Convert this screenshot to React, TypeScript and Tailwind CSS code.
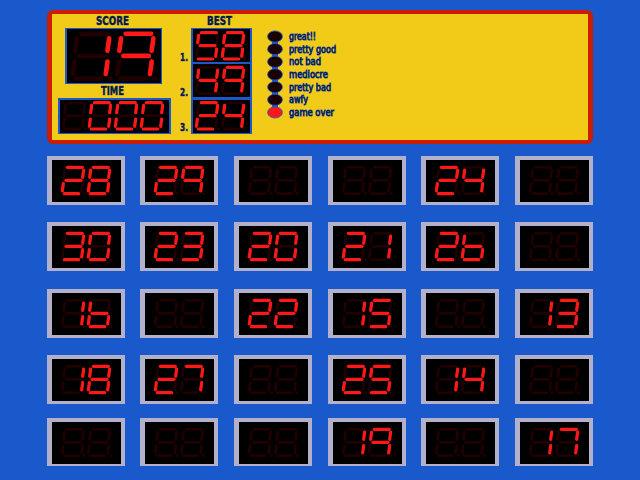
const SHAPES: Record<string, string> = {
  "0": "abcdef", "1": "bc", "2": "abdeg", "3": "abcdg", "4": "bcfg",
  "5": "acdfg", "6": "cdefg", "7": "abc", "8": "abcdefg", "9": "abcfg", " ": "",
};

const SEGMENTS: Record<string, [number, number, number, number]> = {
  a: [46, 22, 91, 22],
  b: [95, 30, 92, 52],
  c: [92, 71, 89, 93],
  d: [37, 101, 80, 101],
  e: [34, 71, 31, 93],
  f: [38, 30, 35, 52],
  g: [42, 61, 87, 61],
};

function Led({ text, w, h, dx = 0, dy = 0, scale = 1 }: { text: string; w: number; h: number; dx?: number; dy?: number; scale?: number }) {
  const chars = text.split("");
  const draw = (on: boolean) =>
    chars.map((ch, i) => (
      <g key={i} transform={`translate(${i * 78} 0)`}>
        {Object.entries(SEGMENTS)
          .filter(([k]) => SHAPES[ch].includes(k) === on)
          .map(([k, p]) => (
            <line key={k} x1={p[0]} y1={p[1]} x2={p[2]} y2={p[3]} />
          ))}
        {!on && <line x1={96} y1={101} x2={98} y2={101} />}
      </g>
    ));
  return (
    <svg width={w} height={h} viewBox={`0 0 ${w * 3} ${h * 3}`} className="block bg-black" strokeLinecap="round">
      <g transform={`translate(${dx} ${dy}) scale(${scale})`}>
        <g stroke="#200000" strokeWidth={8.5}>{draw(false)}</g>
        <g stroke="#ff1818" strokeWidth={scale > 1 ? 8.2 : 9.6}>{draw(true)}</g>
      </g>
    </svg>
  );
}

function Label({ text, width, size, bold = false }: { text: string; width: number; size: number; bold?: boolean }) {
  return (
    <svg width={width} height={13} className="block overflow-visible">
      <text
        x={0}
        y={10}
        textLength={width}
        lengthAdjust="spacingAndGlyphs"
        fontSize={size}
        fontWeight={bold ? 700 : 400}
        fill="#08183c"
        stroke="#1a4da8"
        strokeWidth={bold ? 0.6 : 1}
        paintOrder="stroke"
      >
        {text}
      </text>
    </svg>
  );
}

const CELLS = [
  ["28", "29", "  ", "  ", "24", "  "],
  ["30", "23", "20", "21", "26", "  "],
  ["16", "  ", "22", "15", "  ", "13"],
  ["18", "27", "  ", "25", "14", "  "],
  ["  ", "  ", "  ", "19", "  ", "17"],
];

const RATINGS: [string, number][] = [
  ["great!!", 27], ["pretty good", 47], ["not bad", 32], ["mediocre", 39],
  ["pretty bad", 42], ["awfy", 19], ["game over", 45],
];

export default function App() {
  return (
    <div className="h-[480px] w-[640px] overflow-hidden bg-[#1a59cc] pt-[10px] pl-[47px] font-['DejaVu_Sans',sans-serif]">
      <header className="flex h-[134px] w-[546px] rounded-[6px] bg-[#cc1c00] px-[5px] py-1">
        <div className="flex h-[126px] w-[536px] bg-[#f2cb19]">
          <section className="w-[119px] pl-[6px]">
            <div className="h-[14px] pt-px pl-[38px]">
              <Label text="SCORE" width={33} size={11.7} bold />
            </div>
            <div className="ml-[7px] h-[56px] w-[97px] bg-[#1a59cc] pt-px pl-[2px]">
              <Led text="19" w={94} h={54} dx={-35} dy={-23} scale={1.7} />
            </div>
            <div className="h-[14px] pt-px pl-[43px]">
              <Label text="TIME" width={23} size={11.7} bold />
            </div>
            <div className="h-[36px] w-[113px] bg-[#1a59cc] pt-[2px] pl-[2px]">
              <Led text=" 000" w={109} h={33} dx={-21} dy={-14} />
            </div>
          </section>
          <section className="w-[20px] pt-[37px] pl-[9px]">
            <div className="h-[35px]"><Label text="1." width={8} size={10.7} bold /></div>
            <div className="h-[35px]"><Label text="2." width={8} size={10.7} bold /></div>
            <div className="h-[35px]"><Label text="3." width={8} size={10.7} bold /></div>
          </section>
          <section className="w-[61px]">
            <div className="h-[14px] pt-px pl-[16px]">
              <Label text="BEST" width={25} size={11.7} bold />
            </div>
            <div className="h-[106px] bg-[#1a59cc] pt-px pl-[2px]">
              <Led text="58" w={57} h={33} dx={-21} dy={-11} />
              <div className="pt-[2px]"><Led text="49" w={57} h={33} dx={-21} dy={-12} /></div>
              <div className="pt-[3px]"><Led text="24" w={57} h={33} dx={-21} dy={-14} /></div>
            </div>
          </section>
          <section className="flex pt-[15px] pl-[15px]">
            <svg width={16} height={92} className="block">
              <rect x={5} y={6} width={6} height={78} fill="#1a59cc" />
              {RATINGS.map(([name], i) => (
                <ellipse key={name} cx={8} cy={7.5 + i * 12.65} rx={7.4} ry={5.6} fill={i === 6 ? "#ff1818" : "#1c0000"} stroke="#1a59cc" strokeWidth={0.8} />
              ))}
            </svg>
            <div className="grid auto-rows-[12.65px] pt-px pl-[6px]">
              {RATINGS.map(([name, width]) => (
                <Label key={name} text={name} width={width} size={10} />
              ))}
            </div>
          </section>
        </div>
      </header>
      <main className="mt-[12px] grid w-[546px] grid-cols-[93px_94px_94px_93px_94px_78px] grid-rows-[66px_67px_66px_63px_48px]">
        {CELLS.map((row, r) =>
          row.map((value, c) => (
            <div key={`${r}-${c}`} className={`w-[78px] bg-[#b3b0cc] pt-1 pl-[5px] ${r === 4 ? "h-[48px]" : "h-[49px]"}`}>
              <Led text={value} w={69} h={42} />
            </div>
          )),
        )}
      </main>
    </div>
  );
}
